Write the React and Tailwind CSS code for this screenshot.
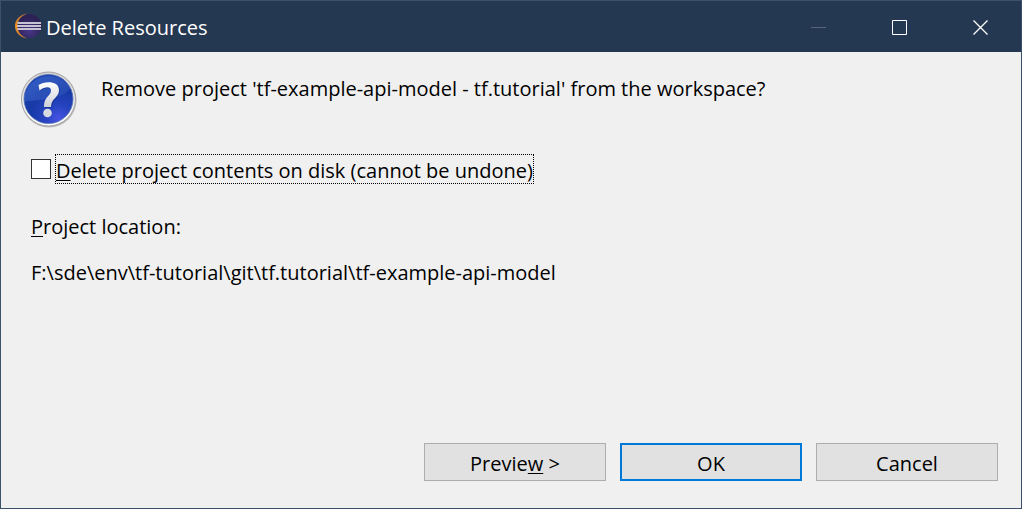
import React from "react";

function EclipseLogo() {
  return (
    <svg width="28" height="28" viewBox="0 0 28 28" className="shrink-0" aria-hidden="true">
      <defs>
        <linearGradient id="crescent" x1="0" y1="0" x2="0" y2="1">
          <stop offset="0" stopColor="#a8693a" />
          <stop offset="0.5" stopColor="#f7941e" />
          <stop offset="1" stopColor="#b8733a" />
        </linearGradient>
        <radialGradient id="planet" cx="0.5" cy="0.7" r="0.55">
          <stop offset="0" stopColor="#473788" />
          <stop offset="1" stopColor="#2c2255" />
        </radialGradient>
      </defs>
      <path d="M13 0.500C6 1.500 1 6.500 1 13s5 11.500 12 12.500C8 23 4 19 4 13S8 3 13 0.500Z" fill="url(#crescent)" />
      <circle cx="15.500" cy="13" r="12" fill="url(#planet)" />
      <path d="M3.500 10h23.500M3 13h24M3.500 16h23.500" stroke="#c6c3d3" strokeWidth="2" />
    </svg>
  );
}

function QuestionIcon() {
  return (
    <svg width="58" height="58" viewBox="0 0 58 58" className="shrink-0" aria-hidden="true">
      <defs>
        <linearGradient id="rim" x1="0" y1="0" x2="0" y2="1">
          <stop offset="0" stopColor="#d0d0d0" />
          <stop offset="0.5" stopColor="#e8e8e8" />
          <stop offset="1" stopColor="#ffffff" />
        </linearGradient>
        <radialGradient id="ball" cx="0.7" cy="0.9" r="0.9">
          <stop offset="0" stopColor="#4653e4" />
          <stop offset="0.3" stopColor="#2743c0" />
          <stop offset="0.65" stopColor="#173aa6" />
          <stop offset="1" stopColor="#1740ae" />
        </radialGradient>
        <linearGradient id="shine" x1="0" y1="0" x2="1" y2="1">
          <stop offset="0" stopColor="#6e9af0" stopOpacity="0.35" />
          <stop offset="1" stopColor="#6e9af0" stopOpacity="0.12" />
        </linearGradient>
        <linearGradient id="mark" x1="0" y1="0" x2="0" y2="1">
          <stop offset="0" stopColor="#ffffff" />
          <stop offset="1" stopColor="#cfd0d8" />
        </linearGradient>
      </defs>
      <circle cx="29" cy="30" r="27.500" fill="#8c8c8c" opacity="0.55" />
      <circle cx="28.500" cy="29" r="27" fill="url(#rim)" stroke="#a4a4a4" strokeWidth="1" />
      <circle cx="28.500" cy="29" r="24.500" fill="url(#ball)" stroke="#5871b4" strokeWidth="0.8" />
      <path d="M4.500 31.500A24.300 24.300 0 0 1 50 18.500C42 29 27 29 4.500 31.500Z" fill="url(#shine)" />
      <path d="M19.500 16C25 12 40 11 40 21C40 29 32 29 32 38H25C24.500 28 32.500 27 32.500 21.500C32.500 17 26 17.500 20.500 21Z" fill="#0b2270" opacity="0.4" />
      <path d="M18.500 15C24 11 39 10 39 20C39 28 31 28 31 37H24C23.500 27 31 26 31 20.500C31 16 25 16.500 19.500 20.500Z" fill="url(#mark)" />
      <circle cx="27.500" cy="43" r="4.300" fill="#d8dae2" />
    </svg>
  );
}

function WindowButton({ label, disabled, children }) {
  return (
    <button type="button" aria-label={label} disabled={disabled} className="flex h-full w-[81px] items-center justify-center">
      <svg width="16" height="16" viewBox="0 0 16 16" fill="none" stroke="currentColor" aria-hidden="true">
        {children}
      </svg>
    </button>
  );
}

const plain = "border border-[#adadad]";
const primary = "border-2 border-[#0078d7]";

function DialogButton({ isDefault, children }) {
  return (
    <button type="button" className={`flex h-[38px] w-[182px] items-center justify-center bg-[#e1e1e1] pt-1 ${isDefault ? primary : plain}`}>
      {children}
    </button>
  );
}

function Mnemonic({ children }) {
  return <span className="underline decoration-1 underline-offset-2">{children}</span>;
}

export default function App() {
  return (
    <div className="flex min-h-screen flex-col border border-[#3d5069] bg-[#f0f0f0] font-['Open_Sans','Noto_Sans',sans-serif] text-[20px] leading-7 text-black">
      <header className="flex h-[51px] items-center bg-[#253851] pl-[13px] text-white">
        <EclipseLogo />
        <h1 className="ml-1 grow pt-0.5">Delete Resources</h1>
        <div className="flex h-full text-white">
          <WindowButton label="Minimize" disabled>
            <path d="M0 8.500h15" stroke="#566579" />
          </WindowButton>
          <WindowButton label="Maximize">
            <path d="M.5 1.500h14v14H.5z" />
          </WindowButton>
          <WindowButton label="Close">
            <path d="M.5 1.500l14 14M14.500 1.500l-14 14" strokeWidth="1.300" />
          </WindowButton>
        </div>
      </header>
      <main className="flex grow flex-col">
        <div className="flex gap-[23px] pt-[18px] pl-[19px]">
          <QuestionIcon />
          <p className="pt-[5px]">Remove project 'tf-example-api-model - tf.tutorial' from the workspace?</p>
        </div>
        <div className="mt-[26px] flex items-center gap-1 pl-[30px]">
          <input id="delete-contents" type="checkbox" className="size-5 appearance-none border border-[#333333] bg-white checked:bg-[#0078d7]" />
          <label htmlFor="delete-contents" className="border border-dotted border-black pt-1 leading-6">
            <Mnemonic>D</Mnemonic>elete project contents on disk (cannot be undone)
          </label>
        </div>
        <p className="mt-[29px] pl-[30px]">
          <Mnemonic>P</Mnemonic>roject location:
        </p>
        <p className="mt-[18px] pl-[30px]">F:\sde\env\tf-tutorial\git\tf.tutorial\tf-example-api-model</p>
        <div className="mt-auto flex justify-end gap-[14px] pr-[23px] pb-[27px]">
          <DialogButton>
            <span>Previe<Mnemonic>w</Mnemonic> &gt;</span>
          </DialogButton>
          <DialogButton isDefault>OK</DialogButton>
          <DialogButton>Cancel</DialogButton>
        </div>
      </main>
    </div>
  );
}
